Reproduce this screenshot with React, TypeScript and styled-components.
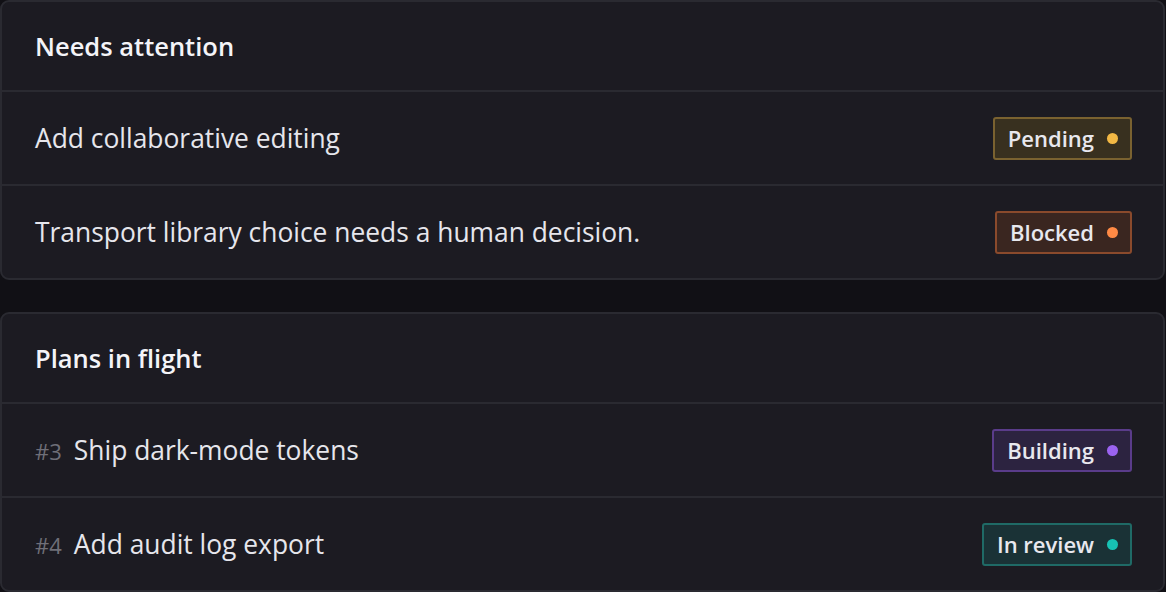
import React from 'react'
import styled, { createGlobalStyle } from 'styled-components'

const GlobalStyle = createGlobalStyle`
  html, body {
    margin: 0;
    padding: 0;
    background: #111015;
  }
  body {
    font-family: 'Open Sans', 'Noto Sans', sans-serif;
    color: #e6e6ec;
  }
`

const Page = styled.div`
  width: 1165px;
  display: flex;
  flex-direction: column;
  gap: 32px;
`

const Card = styled.section`
  background: #1c1b22;
  border: 2px solid #2a2a31;
  border-radius: 9px;
  overflow: hidden;
`

const CardHeader = styled.div`
  height: 88px;
  display: flex;
  align-items: center;
  padding: 0 33px;
  font-size: 25.5px;
  font-weight: 600;
  color: #f4f4f8;
`

const Row = styled.div`
  height: 92px;
  border-top: 2px solid #2a2a31;
  display: flex;
  align-items: center;
  justify-content: space-between;
  padding: 0 31px 0 33px;
`

const RowTitle = styled.div`
  display: flex;
  align-items: baseline;
  gap: 12px;
  font-size: 26.4px;
  color: #e6e6ec;
`

const PlanNumber = styled.span`
  font-size: 22px;
  color: #6f6f78;
`

type Tone = 'pending' | 'blocked' | 'building' | 'review'

const tones: Record<Tone, { bg: string; border: string; dot: string }> = {
  pending: { bg: '#38301f', border: '#7a6230', dot: '#f2b844' },
  blocked: { bg: '#3a2620', border: '#8a4a2c', dot: '#ff8a45' },
  building: { bg: '#2c2340', border: '#5a3c8a', dot: '#9b63f0' },
  review: { bg: '#1a3236', border: '#1f6a66', dot: '#17c2b4' },
}

const Pill = styled.span<{ $tone: Tone }>`
  display: inline-flex;
  align-items: center;
  gap: 13px;
  height: 43px;
  box-sizing: border-box;
  padding: 0 12px 0 13px;
  border-radius: 3px;
  border: 2px solid ${({ $tone }) => tones[$tone].border};
  background: ${({ $tone }) => tones[$tone].bg};
  font-size: 22px;
  font-weight: 600;
  color: #e8e8ee;
`

const Dot = styled.span<{ $tone: Tone }>`
  width: 11px;
  height: 11px;
  border-radius: 50%;
  background: ${({ $tone }) => tones[$tone].dot};
`

const labels: Record<Tone, string> = {
  pending: 'Pending',
  blocked: 'Blocked',
  building: 'Building',
  review: 'In review',
}

const Status = ({ tone }: { tone: Tone }) => (
  <Pill $tone={tone}>
    {labels[tone]}
    <Dot $tone={tone} />
  </Pill>
)

const attention = [
  { title: 'Add collaborative editing', tone: 'pending' as Tone },
  { title: 'Transport library choice needs a human decision.', tone: 'blocked' as Tone },
]

const plans = [
  { id: 3, title: 'Ship dark-mode tokens', tone: 'building' as Tone },
  { id: 4, title: 'Add audit log export', tone: 'review' as Tone },
]

export default function App() {
  return (
    <>
      <GlobalStyle />
      <Page>
        <Card>
          <CardHeader>Needs attention</CardHeader>
          {attention.map((item) => (
            <Row key={item.title}>
              <RowTitle>{item.title}</RowTitle>
              <Status tone={item.tone} />
            </Row>
          ))}
        </Card>
        <Card>
          <CardHeader>Plans in flight</CardHeader>
          {plans.map((plan) => (
            <Row key={plan.id}>
              <RowTitle>
                <PlanNumber>#{plan.id}</PlanNumber>
                {plan.title}
              </RowTitle>
              <Status tone={plan.tone} />
            </Row>
          ))}
        </Card>
      </Page>
    </>
  )
}
